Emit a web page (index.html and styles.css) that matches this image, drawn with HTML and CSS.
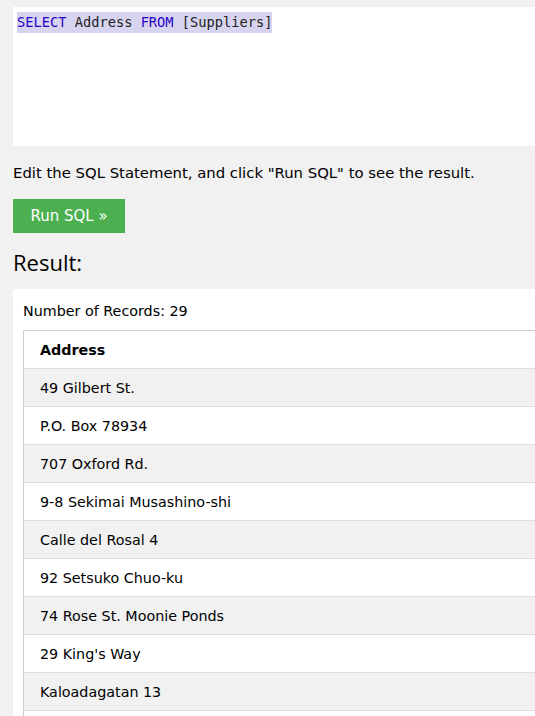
FILE: index.html
```html
<!DOCTYPE html>
<html>
<head>
<meta charset="utf-8">
<link rel="stylesheet" href="styles.css">
</head>
<body>
<div class="page">
  <div class="editor">
    <span class="sel"><span class="kw">SELECT</span> Address <span class="kw">FROM</span> [Suppliers]</span>
  </div>
  <p class="hint">Edit the SQL Statement, and click "Run SQL" to see the result.</p>
  <button class="run">Run SQL »</button>
  <h2 class="result-title">Result:</h2>
  <div class="result">
    <div class="count">Number of Records: 29</div>
    <table class="grid">
      <tr><th>Address</th></tr>
      <tr><td>49 Gilbert St.</td></tr>
      <tr><td>P.O. Box 78934</td></tr>
      <tr><td>707 Oxford Rd.</td></tr>
      <tr><td>9-8 Sekimai Musashino-shi</td></tr>
      <tr><td>Calle del Rosal 4</td></tr>
      <tr><td>92 Setsuko Chuo-ku</td></tr>
      <tr><td>74 Rose St. Moonie Ponds</td></tr>
      <tr><td>29 King's Way</td></tr>
      <tr><td>Kaloadagatan 13</td></tr>
      <tr><td>&nbsp;</td></tr>
    </table>
  </div>
</div>
</body>
</html>
```
FILE: styles.css
```css
html, body {
  margin: 0;
  padding: 0;
  overflow: hidden;
  background: #f1f1f1;
}
body {
  font-family: "DejaVu Sans", Verdana, sans-serif;
  font-size: 15px;
  color: #000;
}
.page {
  padding: 7px 0 0 13px;
  width: 600px;
}
.editor {
  background: #fff;
  height: 130px;
  padding: 5px 4px 4px 4px;
  font-family: "DejaVu Sans Mono", "Liberation Mono", monospace;
  font-size: 13.7px;
  line-height: 21px;
}
.sel {
  background: #d7d4f0;
  display: inline-block;
  color: #222;
}
.kw { color: #2a00c8; }
.hint {
  margin: 17px 0 0 0;
  line-height: 20px;
  font-size: 14.85px;
}
.run {
  display: block;
  margin-top: 16px;
  background: #4CAF50;
  color: #fff;
  border: 0;
  height: 34px;
  width: 112px;
  font-family: "DejaVu Sans", Verdana, sans-serif;
  font-size: 15px;
  padding: 0;
}
.result-title {
  font-family: "Open Sans", "Segoe UI", sans-serif;
  font-weight: normal;
  font-size: 22px;
  margin: 14px 0 0 0;
  line-height: 30px;
}
.result {
  background: #fff;
  margin-top: 12px;
  padding: 12px 10px 0 10px;
  font-size: 14.3px;
}
.count {
  line-height: 20px;
  margin-bottom: 9px;
}
.grid {
  border-collapse: collapse;
  width: 100%;
  border: 1px solid #ccc;
}
.grid th, .grid td {
  text-align: left;
  height: 38px;
  padding: 0 16px;
  border-bottom: 1px solid #ddd;
  box-sizing: border-box;
}
.grid th { font-weight: bold; }
.grid tr:nth-child(even) td { background: #f1f1f1; }
```
